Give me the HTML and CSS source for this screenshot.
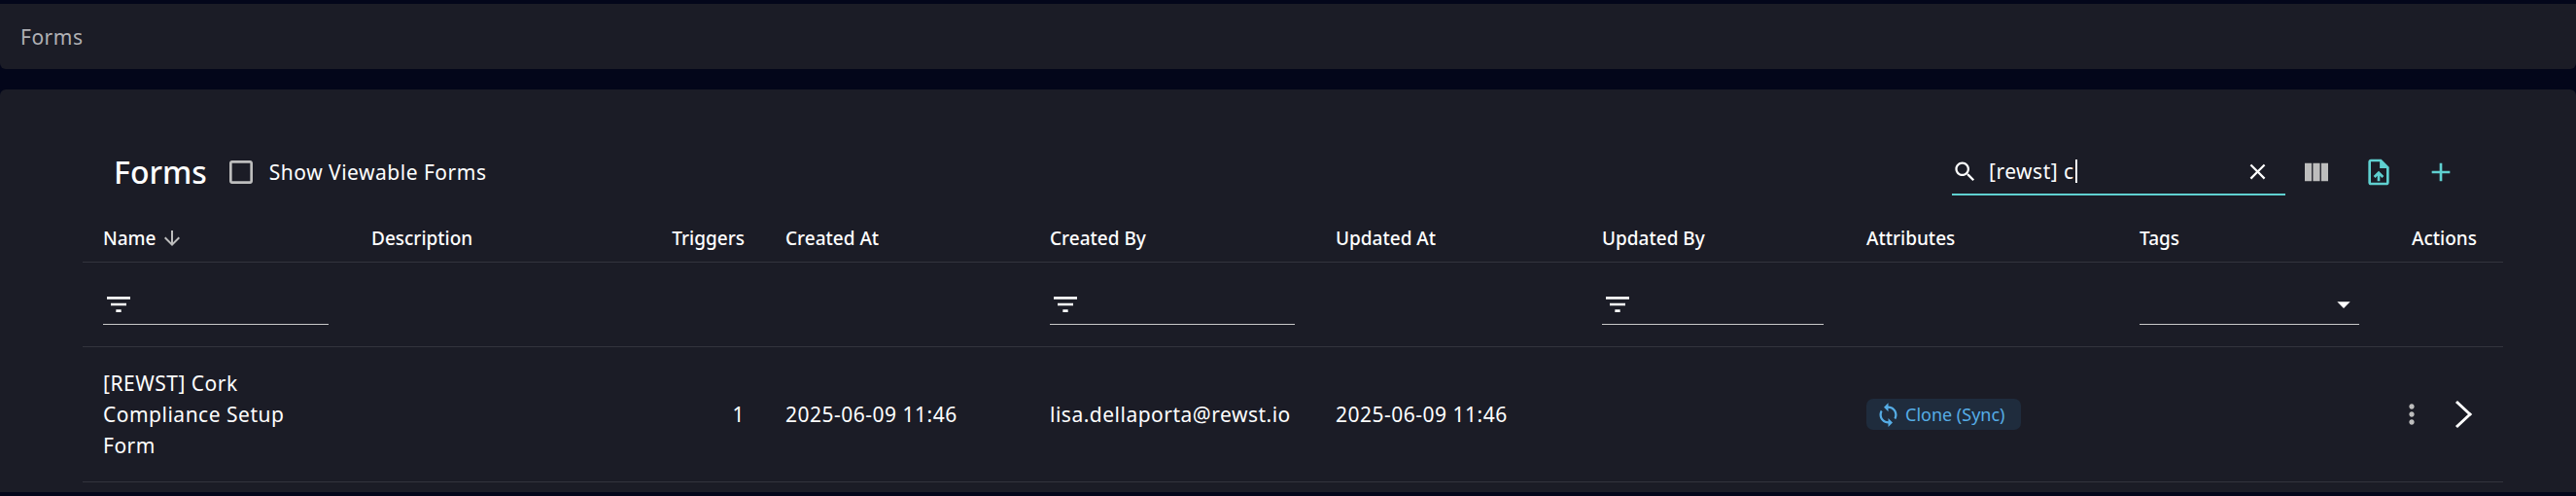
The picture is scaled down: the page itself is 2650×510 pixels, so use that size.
FILE: index.html
```html
<!DOCTYPE html>
<html lang="en">
<head>
<meta charset="utf-8">
<title>Forms</title>
<link rel="stylesheet" href="styles.css">
</head>
<body>
<div class="crumbs">Forms</div>
<main class="card">
  <div class="toolbar">
    <h1 class="title">Forms</h1>
    <label class="check">
      <svg class="ic32 grey" viewBox="0 0 24 24"><path d="M19 5v14H5V5h14m0-2H5c-1.1 0-2 .9-2 2v14c0 1.1.9 2 2 2h14c1.1 0 2-.9 2-2V5c0-1.1-.9-2-2-2z"/></svg>
      <span>Show Viewable Forms</span>
    </label>
    <div class="spacer"></div>
    <div class="search">
      <svg class="ic27 white" viewBox="0 0 24 24"><path d="M15.5 14h-.79l-.28-.27C15.41 12.59 16 11.11 16 9.5 16 5.91 13.09 3 9.5 3S3 5.91 3 9.5 5.91 16 9.5 16c1.61 0 3.09-.59 4.23-1.57l.27.28v.79l5 4.99L20.49 19l-4.99-5zm-6 0C7.01 14 5 11.99 5 9.5S7.01 5 9.5 5 14 7.01 14 9.5 11.99 14 9.5 14z"/></svg>
      <span class="query">[rewst] c</span><span class="caret"></span>
      <svg class="ic27 white clear" viewBox="0 0 24 24"><path d="M19 6.41 17.59 5 12 10.59 6.41 5 5 6.41 10.59 12 5 17.59 6.41 19 12 13.41 17.59 19 19 17.59 13.41 12z"/></svg>
    </div>
    <svg class="ic32 grey tool-cols" viewBox="0 0 24 24"><path d="M14.67 5v14H9.33V5h5.34zm1 14H21V5h-5.33v14zm-7.34 0V5H3v14h5.33z"/></svg>
    <svg class="ic32 teal tool-up" viewBox="0 0 24 24"><path d="M14 2H6c-1.1 0-1.99.9-1.99 2L4 20c0 1.1.89 2 1.99 2H18c1.1 0 2-.9 2-2V8l-6-6zm4 18H6V4h7v5h5v11zM8 15.01l1.41 1.41L11 14.84V19h2v-4.16l1.59 1.59L16 15.01 12.01 11z"/><path d="M13 3h1l6 6h-7z"/></svg>
    <svg class="ic32 teal tool-add" viewBox="0 0 24 24"><path d="M19 13h-6v6h-2v-6H5v-2h6V5h2v6h6v2z"/></svg>
  </div>

  <div class="table">
    <div class="row head">
      <div class="cell name-head">Name <svg class="ic24 grey" viewBox="0 0 24 24"><path d="M20 12l-1.41-1.41L13 16.17V4h-2v12.17l-5.58-5.59L4 12l8 8 8-8z"/></svg></div>
      <div class="cell">Description</div>
      <div class="cell right">Triggers</div>
      <div class="cell">Created At</div>
      <div class="cell">Created By</div>
      <div class="cell">Updated At</div>
      <div class="cell">Updated By</div>
      <div class="cell">Attributes</div>
      <div class="cell">Tags</div>
      <div class="cell end">Actions</div>
    </div>
    <div class="row filters">
      <div class="cell"><div class="filter w-name"><svg class="ic32 white" viewBox="0 0 24 24"><path d="M10 18h4v-2h-4v2zM3 6v2h18V6H3zm3 7h12v-2H6v2z"/></svg></div></div>
      <div class="cell"></div>
      <div class="cell"></div>
      <div class="cell"></div>
      <div class="cell"><div class="filter w-created"><svg class="ic32 white" viewBox="0 0 24 24"><path d="M10 18h4v-2h-4v2zM3 6v2h18V6H3zm3 7h12v-2H6v2z"/></svg></div></div>
      <div class="cell"></div>
      <div class="cell"><div class="filter w-updated"><svg class="ic32 white" viewBox="0 0 24 24"><path d="M10 18h4v-2h-4v2zM3 6v2h18V6H3zm3 7h12v-2H6v2z"/></svg></div></div>
      <div class="cell"></div>
      <div class="cell"><div class="filter w-tags select"><svg class="ic32 white" viewBox="0 0 24 24"><path d="M7 10l5 5 5-5z"/></svg></div></div>
      <div class="cell"></div>
    </div>
    <div class="row data">
      <div class="cell name-cell">[REWST] Cork Compliance Setup Form</div>
      <div class="cell"></div>
      <div class="cell right">1</div>
      <div class="cell">2025-06-09 11:46</div>
      <div class="cell">lisa.dellaporta@rewst.io</div>
      <div class="cell">2025-06-09 11:46</div>
      <div class="cell"></div>
      <div class="cell chip-cell"><span class="chip"><svg class="ic27 blue" viewBox="0 0 24 24"><path d="M12 4V1L8 5l4 4V6c3.31 0 6 2.69 6 6 0 1.01-.25 1.97-.7 2.8l1.46 1.46C19.54 15.03 20 13.57 20 12c0-4.42-3.58-8-8-8zm0 14c-3.31 0-6-2.69-6-6 0-1.01.25-1.97.7-2.8L5.24 7.74C4.46 8.97 4 10.43 4 12c0 4.42 3.58 8 8 8v3l4-4-4-4v3z"/></svg>Clone (Sync)</span></div>
      <div class="cell"></div>
      <div class="cell end actions">
        <svg class="ic32 grey" viewBox="0 0 24 24"><path d="M12 8c1.1 0 2-.9 2-2s-.9-2-2-2-2 .9-2 2 .9 2 2 2zm0 2c-1.1 0-2 .9-2 2s.9 2 2 2 2-.9 2-2-.9-2-2-2zm0 6c-1.1 0-2 .9-2 2s.9 2 2 2 2-.9 2-2-.9-2-2-2z"/></svg>
        <svg class="chevron" viewBox="0 0 20 30"><path d="M3 2l14 13L3 28"/></svg>
      </div>
    </div>
  </div>
</main>
</body>
</html>
```
FILE: styles.css
```css
* { box-sizing: border-box; }
html, body { height: 100%; }
body {
  margin: 0;
  padding-top: 4px;
  overflow: hidden;
  background: #03061a;
  color: #fff;
  font-family: "Noto Sans", "Liberation Sans", sans-serif;
  font-size: 21px;
  letter-spacing: 0.5px;
}
svg { display: block; flex: none; fill: currentColor; }
.ic24 { width: 24px; height: 24px; }
.ic27 { width: 27px; height: 27px; }
.ic32 { width: 32px; height: 32px; }
.white { color: #fff; }
.grey { color: #bdbdbd; }
.teal { color: #5fd0d0; }
.blue { color: #56ade6; }

.crumbs {
  height: 67px;
  padding: 0 21px;
  display: flex;
  align-items: center;
  background: #1b1c26;
  color: #b0b0b4;
  border-radius: 0 0 6px 6px;
}
.card {
  height: 414px;
  margin-top: 21px;
  padding: 58px 75px 0 85px;
  background: #1b1c26;
  border-radius: 6px 6px 0 0;
}

.toolbar {
  height: 54px;
  display: flex;
  align-items: center;
  padding: 0 48px 0 32px;
}
.title { margin: 0; font-size: 32px; font-weight: 500; line-height: 1; letter-spacing: 0; }
.check { display: flex; align-items: center; gap: 13px; margin-left: 19px; }
.spacer { flex: 1; }
.search {
  width: 343px;
  height: 48px;
  padding: 0 15px 0 0;
  display: flex;
  align-items: center;
  border-bottom: 2px solid #5fd0d0;
}
.query { margin-left: 11px; white-space: pre; }
.caret { width: 2px; height: 24px; margin-left: 1px; background: #fff; }
.clear { margin-left: auto; }
.tool-cols { margin-left: 16px; }
.tool-up { margin-left: 32px; }
.tool-add { margin-left: 32px; }

.table { margin-top: 17px; }
.row {
  display: grid;
  grid-template-columns: 276px 311px 115px 272px 294px 274px 272px 281px 270px 125px;
  align-items: center;
  border-bottom: 1px solid #33343d;
}
.head { height: 49px; font-weight: 500; font-size: 19px; letter-spacing: 0; }
.filters { height: 87px; align-items: start; padding-top: 27px; }
.data { height: 139px; }
.cell { padding-left: 21px; white-space: nowrap; }
.right { text-align: right; padding-right: 21px; padding-left: 0; }
.end { padding-right: 27px; padding-left: 0; text-align: right; }
.name-head { display: flex; align-items: center; gap: 4px; }
.name-cell { white-space: normal; padding-right: 55px; line-height: 32px; }
.chip-cell { display: flex; }

.filter {
  height: 37px;
  display: flex;
  align-items: flex-start;
  border-bottom: 1px solid #c8c8c8;
}
.w-name { width: 232px; }
.w-created { width: 252px; }
.w-updated { width: 228px; }
.w-tags { width: 226px; }
.select { justify-content: flex-end; }

.chip {
  display: flex;
  align-items: center;
  gap: 4px;
  height: 32px;
  padding: 0 16px 0 9px;
  background: #1f2c3d;
  border-radius: 7px;
  color: #56ade6;
  font-size: 18px;
  letter-spacing: 0;
}
.actions { display: flex; justify-content: flex-end; align-items: center; gap: 27px; padding-right: 31px; }
.chevron { width: 20px; height: 30px; fill: none; stroke: #fff; stroke-width: 3; }
```
